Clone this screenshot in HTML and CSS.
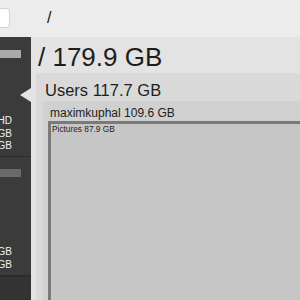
FILE: index.html
```html
<html>
<head>
    <title>Disk Map</title>
    <link rel="stylesheet" href="styles.css">
</head>
<body>
    <div id="window">

        <div id="toolbar">
            <div class="search"></div>
            <div class="path">/</div>
        </div>

        <div id="content">

            <div id="sidebar">
                <div class="volume selected">
                    <div class="usage light"></div>
                    <div class="vol-line"><span>Macintosh HD</span></div>
                    <div class="vol-line"><span>117.7 GB</span></div>
                    <div class="vol-line"><span>179.9 GB</span></div>
                </div>
                <div class="volume">
                    <div class="usage dark"></div>
                    <div class="vol-line"><span></span></div>
                    <div class="vol-line"><span>2.1 GB</span></div>
                    <div class="vol-line"><span>4.0 GB</span></div>
                </div>
                <div class="sidebar-foot"></div>
            </div>

            <div id="map">
                <div class="node root">
                    <div class="label">/ 179.9 GB</div>
                    <div class="node users">
                        <div class="label">Users 117.7 GB</div>
                        <div class="node home">
                            <div class="label">maximkuphal 109.6 GB</div>
                            <div class="node pictures">
                                <div class="label">Pictures 87.9 GB</div>
                            </div>
                        </div>
                    </div>
                </div>
            </div>

        </div>
    </div>
</body>
</html>
```

FILE: styles.css
```css
body {
    margin: 0px;
    padding: 0px;
    font-family: 'Liberation Sans', Arial, sans-serif;
    color: #1e1e1e;
    overflow: hidden;
}

#window {
    width: 300px;
    height: 300px;
    overflow: hidden;
    display: flex;
    flex-direction: column;
}

/* top toolbar */
#toolbar {
    height: 37px;
    flex: none;
    background: #ececec;
    display: flex;
    align-items: flex-start;
}

.search {
    width: 30px;
    height: 18px;
    margin: 8px 0 0 -22px;
    background: #ffffff;
    border: 1px solid #d2d2d2;
    border-radius: 4px;
}

.path {
    margin: 9px 0 0 37px;
    font-size: 16px;
    line-height: 18px;
    color: #111;
}

#content {
    flex: 1;
    display: flex;
    min-height: 0;
}

/* volumes list */
#sidebar {
    width: 31px;
    flex: none;
    background: #3b3b3b;
    display: flex;
    flex-direction: column;
    overflow: hidden;
}

.volume {
    position: relative;
    padding: 13px 0 3px 0;
    border-bottom: 1px solid #2c2c2c;
}

.volume + .volume {
    padding: 12px 0 4px 0;
}

.usage {
    width: 21px;
    height: 8px;
    margin-bottom: 57px;
}

.usage.light {
    background: #a9a9a9;
}

.usage.dark {
    background: #6a6a6a;
}

.vol-line {
    display: flex;
    justify-content: flex-end;
    padding-right: 19px;
    height: 12.5px;
    line-height: 12.5px;
    font-size: 10px;
    color: #f0f0f0;
    white-space: nowrap;
}

/* little arrow pointing at the selected volume */
.volume.selected::after {
    content: "";
    position: absolute;
    right: 0px;
    top: 51px;
    border-right: 11px solid #e3e3e3;
    border-top: 7.5px solid transparent;
    border-bottom: 7.5px solid transparent;
}

.sidebar-foot {
    flex: 1;
    background: #333333;
    border-top: 1px solid #2a2a2a;
}

/* treemap */
#map {
    flex: 1;
    overflow: hidden;
}

.node {
    width: 420px;
}

.root {
    background: #e3e3e3;
    padding: 5px 0 0 5px;
    height: 400px;
}

.root > .label {
    font-size: 26px;
    line-height: 31px;
    padding-left: 2px;
}

.users {
    background: #d9d9d9;
    padding: 7px 0 0 7px;
    height: 400px;
}

.users > .label {
    font-size: 16.5px;
    line-height: 21px;
    padding-left: 2px;
}

.home {
    background: #d0d0d0;
    padding: 5px 0 0 5px;
    height: 400px;
}

.home > .label {
    font-size: 12px;
    line-height: 14.5px;
    padding-left: 2px;
}

.pictures {
    background: #c6c6c6;
    border-top: 3px solid #7a7a7a;
    border-left: 3px solid #7a7a7a;
    height: 400px;
}

.pictures > .label {
    font-size: 8.3px;
    line-height: 10px;
    padding: 0 0 0 1px;
}
```
